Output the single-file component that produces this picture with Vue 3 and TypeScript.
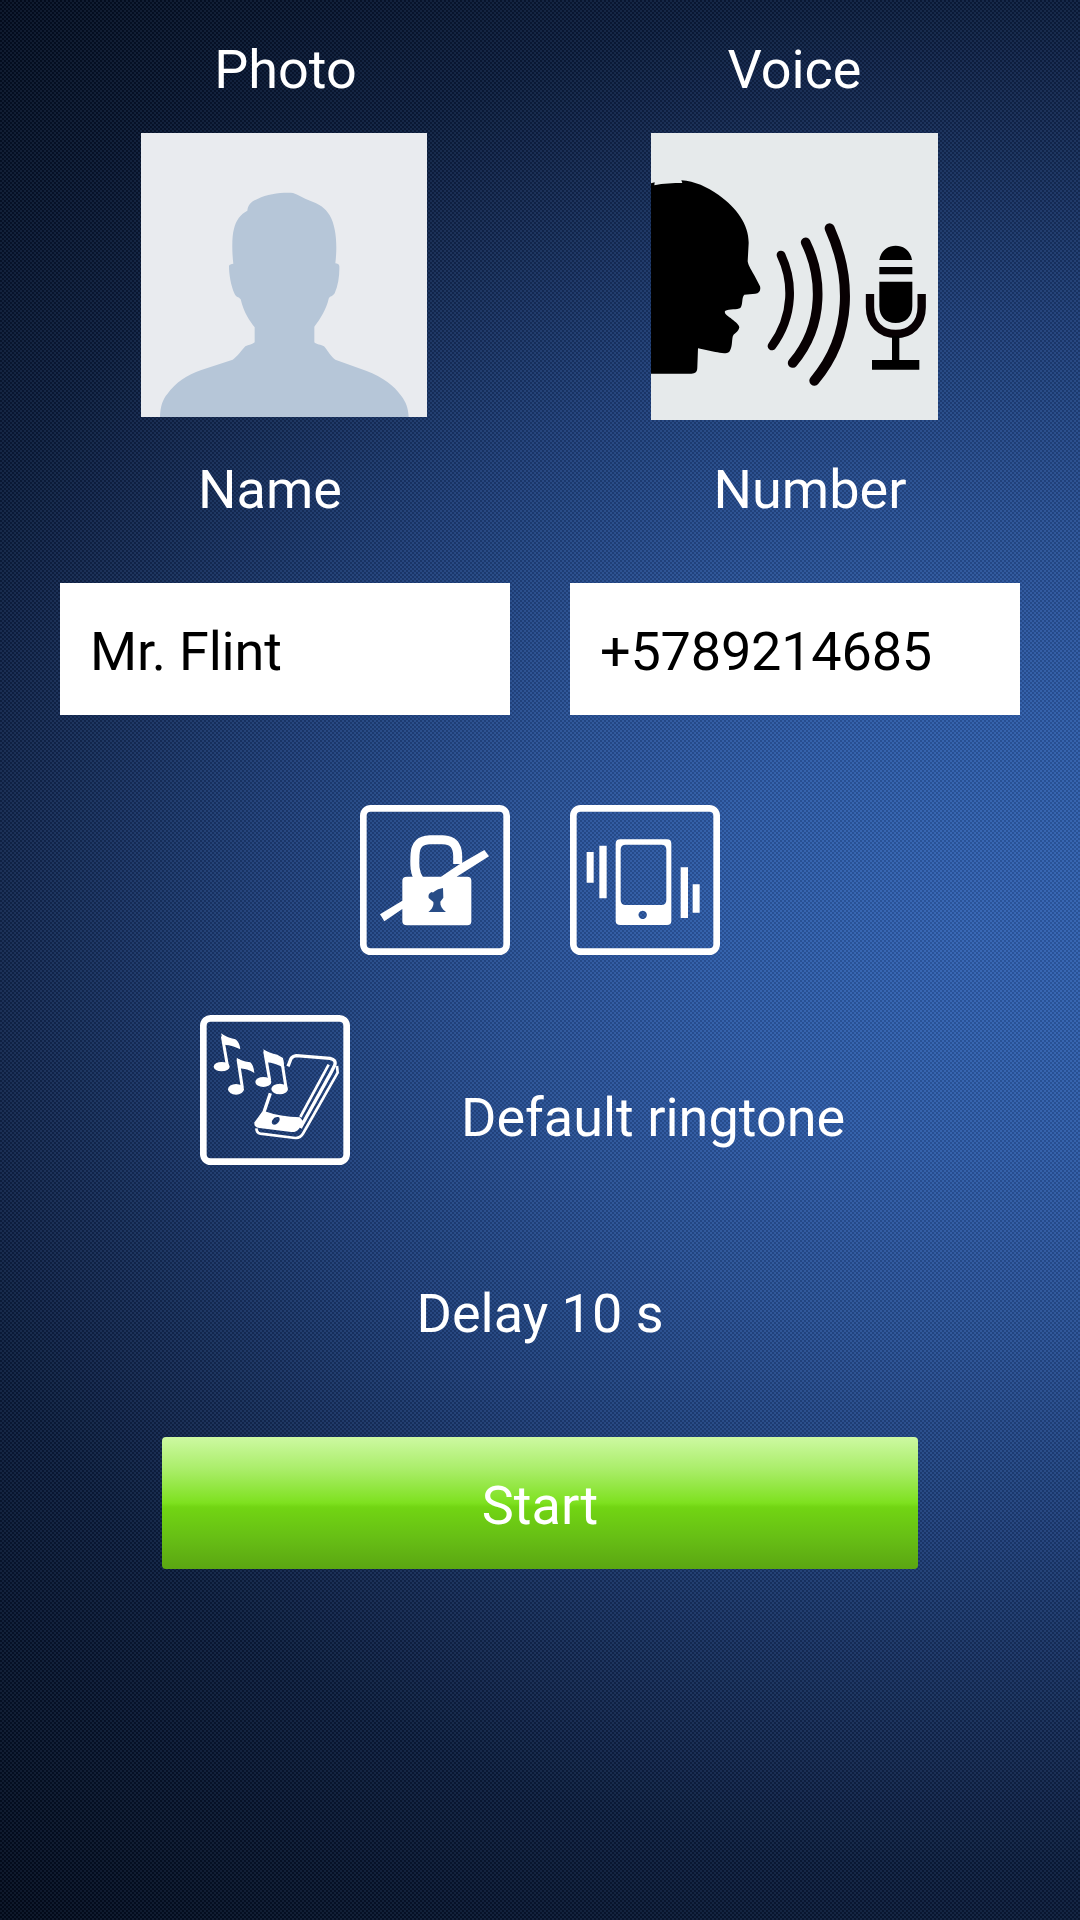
<script setup lang="ts">
import { ref } from 'vue'

const name = ref<string>('Mr. Flint')
const phone = ref<string>('+5789214685')
const ringtone = ref<string>('Default ringtone')
const delay = ref<number>(10)
</script>

<template>
  <main class="screen">
    <section class="media">
      <div class="media-item photo">
        <h2 class="label">Photo</h2>
        <svg class="photo-img" viewBox="33 39 858 852" preserveAspectRatio="none">
          <rect x="33" y="39" width="858" height="852" fill="#e9ebef" />
          <path
            fill="#b6c6d8"
            d="M90 891C91 860 98 838 112 822C138 786 170 766 214 750L308 719C320 712 334 692 346 679C356 674 368 674 374 667V622C360 604 342 580 332 538C326 530 318 532 314 522C302 496 297 462 297 438C298 433 304 432 310 431C306 400 305 350 312 326C318 300 332 282 352 272C354 254 364 244 384 236C412 222 456 217 489 219C504 224 520 235 540 242C566 251 586 263 599 286C620 322 622 380 616 430C622 431 627 432 628 438C629 464 625 496 614 520C608 530 600 528 596 536C590 566 570 598 553 620V667C558 674 574 674 582 679C592 690 604 712 616 719L708 752C760 772 792 796 814 828C828 846 835 866 836 891Z"
          />
        </svg>
      </div>
      <div class="media-item voice">
        <h2 class="label">Voice</h2>
        <svg class="voice-img" viewBox="33 39 861 861">
          <rect x="33" y="39" width="861" height="861" fill="#e6eaeb" />
          <path
            d="M33 190L44 187L43 196C70 190 100 189 127 189L124 181C165 184 200 200 236 225C290 264 327 314 326 370L323 424C325 438 337 455 344 468L360 499C363 511 358 520 346 521L313 524C304 532 310 552 301 564C292 570 268 566 255 573C252 582 264 588 272 594C282 603 297 612 298 622C296 636 281 640 278 650C275 666 277 682 268 695C258 703 240 698 226 696L174 685L172 742C172 756 166 761 154 761H33Z"
          />
          <g fill="none" stroke="#080103" stroke-linecap="round">
            <path stroke-width="26" d="M423 405C459 480 464 585 396 678" />
            <path stroke-width="29" d="M497 367C543 460 559 610 458 729" />
            <path stroke-width="30" d="M569 325C631 462 643 640 523 782" />
          </g>
          <path d="M718 420C722 394 741 377 767 377S812 394 816 420ZM718 441H817V463H718ZM718 485H817V558C817 590 797 609 767 609S718 590 718 558Z" />
          <path fill="none" stroke="#080103" stroke-width="25" d="M690 522V562C690 612 723 642 767 642S845 612 845 562V522" />
          <path d="M756 648H778V720H838V749H696V720H756Z" />
        </svg>
      </div>
    </section>

    <section class="fields">
      <label class="field">
        <span class="label">Name</span>
        <input v-model="name" class="input name-input" type="text" />
      </label>
      <label class="field">
        <span class="label">Number</span>
        <input v-model="phone" class="input number-input" type="text" />
      </label>
    </section>

    <section class="toggles">
      <button class="icon-button" aria-label="Lock screen">
        <svg viewBox="30 30 450 450">
          <rect class="frame" x="40" y="40" width="430" height="430" rx="22" />
          <path class="line" stroke-width="27" d="M208 254C192 232 194 205 195 180C196 148 211 135 240 134H278C309 135 322 151 323 181V207" />
          <path class="solid" d="M403 165L417 184L320 245H352Q364 245 364 257V379Q364 391 352 391H171Q157 391 157 379V342L103 379L90 358L157 317V257Q157 245 171 245H273L325 210Z" />
          <path fill="#284d87" d="M279 279L280 308L271 320C270 332 276 342 288 351H235C246 343 252 332 250 321L236 309Q233 296 245 291Q250 294 254 289Q262 282 279 279Z" />
        </svg>
      </button>
      <button class="icon-button" aria-label="Vibration">
        <svg viewBox="30 30 450 450">
          <rect class="frame" x="40" y="40" width="430" height="430" rx="22" />
          <path
            class="solid"
            fill-rule="evenodd"
            d="M181 133H321Q334 133 334 146V377Q334 390 321 390H181Q167 390 167 377V146Q167 133 181 133ZM197 149Q182 149 182 164V314Q182 330 197 330H304Q319 330 319 314V164Q319 149 304 149ZM248 347A12.500 12.500 0 1 0 248.100 347Z"
          />
          <path class="solid" d="M80 171H101V263H80ZM118 152H140V310H118ZM362 217H384V369H362ZM398 268H419V353H398Z" />
        </svg>
      </button>
    </section>

    <section class="ringtone">
      <button class="icon-button" aria-label="Choose ringtone">
        <svg viewBox="30 30 450 450">
          <rect class="frame" x="40" y="40" width="430" height="430" rx="22" />
          <path class="line" stroke-width="9" d="M97 94L112 181M144 163L157 248M224 139L239 226M275 165L288 248" />
          <path class="solid" d="M93 85Q111 98 136 103Q148 110 151 133Q130 121 103 119ZM140 158Q157 169 181 172Q191 180 193 204Q173 191 147 190ZM220 133Q237 145 262 149L279 159L283 190Q256 173 229 172Z" />
          <g class="solid">
            <ellipse cx="95" cy="185" rx="24" ry="14" />
            <ellipse cx="138" cy="253" rx="24" ry="16" />
            <ellipse cx="220" cy="231" rx="24" ry="15" />
            <ellipse cx="269" cy="252" rx="25" ry="16" />
          </g>
          <path class="line" stroke-width="10" d="M241 265L222 321L196 357M294 184L303 161Q308 153 319 152L420 160Q440 164 434 181L425 199L331 369" />
          <path class="line" stroke-width="8" d="M416 179L331 336M441 183L443 203L340 384Q331 400 316 399L211 386Q200 384 199 370" />
          <path class="solid" fill-rule="evenodd" d="M222 318Q272 336 330 337L340 350L327 371Q319 382 304 381L208 369Q190 365 194 355ZM265 336Q252 335 247 346Q242 357 252 359Q262 359 268 348Q271 337 265 336Z" />
        </svg>
      </button>
      <p class="label">{{ ringtone }}</p>
    </section>

    <p class="label delay">Delay {{ delay }} s</p>
    <button class="start">Start</button>
  </main>
</template>

<style>
body {
  margin: 0;
}
</style>

<style scoped>
.screen {
  box-sizing: border-box;
  display: flex;
  flex-direction: column;
  width: 1080px;
  height: 1920px;
  padding-top: 38px;
  overflow: hidden;
  color: #fff;
  font-family: Roboto, "Liberation Sans", sans-serif;
  font-size: 54px;
  line-height: 64px;
  background:
    conic-gradient(rgba(150, 190, 255, 0.08) 25%, rgba(0, 5, 25, 0.14) 0 50%, rgba(150, 190, 255, 0.08) 0 75%, rgba(0, 5, 25, 0.14) 0) 0 0 / 4px 4px,
    radial-gradient(ellipse 1200px 1030px at 970px 930px, #3262b0 0%, #2e5ba5 22%, #284f91 40%, #1d3c73 60%, #13284f 78%, #0b1b38 91%, #071329 105%, #020a18 125%);
}

.label {
  margin: 0;
  font-size: 54px;
  font-weight: 400;
  line-height: 64px;
}

.media {
  display: flex;
  gap: 224px;
  padding-left: 141px;
  height: 382px;
}

.media-item {
  display: flex;
  flex-direction: column;
  align-items: center;
  gap: 31px;
}

.photo .label {
  padding-left: 3px;
}

.photo-img {
  display: block;
  width: 286px;
  height: 284px;
}

.voice-img {
  display: block;
  width: 287px;
  height: 287px;
}

.fields {
  display: flex;
  margin-top: 38px;
}

.field {
  display: flex;
  flex-direction: column;
  align-items: center;
  width: 540px;
}

.input {
  box-sizing: border-box;
  width: 450px;
  height: 132px;
  margin-top: 61px;
  padding: 4px 30px 0;
  border: 0;
  border-radius: 0;
  outline: 0;
  background: #fff;
  color: #000;
  font: inherit;
  letter-spacing: -0.2px;
}

.name-input {
  align-self: flex-end;
  margin-right: 30px;
}

.number-input {
  align-self: flex-start;
  margin-left: 30px;
}

.toggles {
  display: flex;
  justify-content: center;
  gap: 60px;
  margin-top: 90px;
}

.icon-button {
  width: 150px;
  height: 150px;
  padding: 0;
  border: 0;
  background: none;
}

.icon-button svg {
  display: block;
  width: 150px;
  height: 150px;
}

.frame {
  fill: none;
  stroke: #fff;
  stroke-width: 20;
}

.line {
  fill: none;
  stroke: #fff;
  stroke-linejoin: round;
}

.solid {
  fill: #fff;
}

.ringtone {
  display: flex;
  align-items: flex-end;
  gap: 111px;
  margin-top: 60px;
  padding-left: 200px;
}

.ringtone .label {
  margin-bottom: 15px;
}

.delay {
  margin-top: 117px;
  text-align: center;
}

.start {
  align-self: center;
  width: 756px;
  height: 132px;
  margin-top: 91px;
  padding: 5px 0 0;
  border: 0;
  border-radius: 4px;
  color: #fff;
  font: inherit;
  background: linear-gradient(#cdf9a2 0%, #a9ed68 25%, #7ee11f 50%, #72d513 53%, #67bf15 76%, #5ba612 100%);
}
</style>
